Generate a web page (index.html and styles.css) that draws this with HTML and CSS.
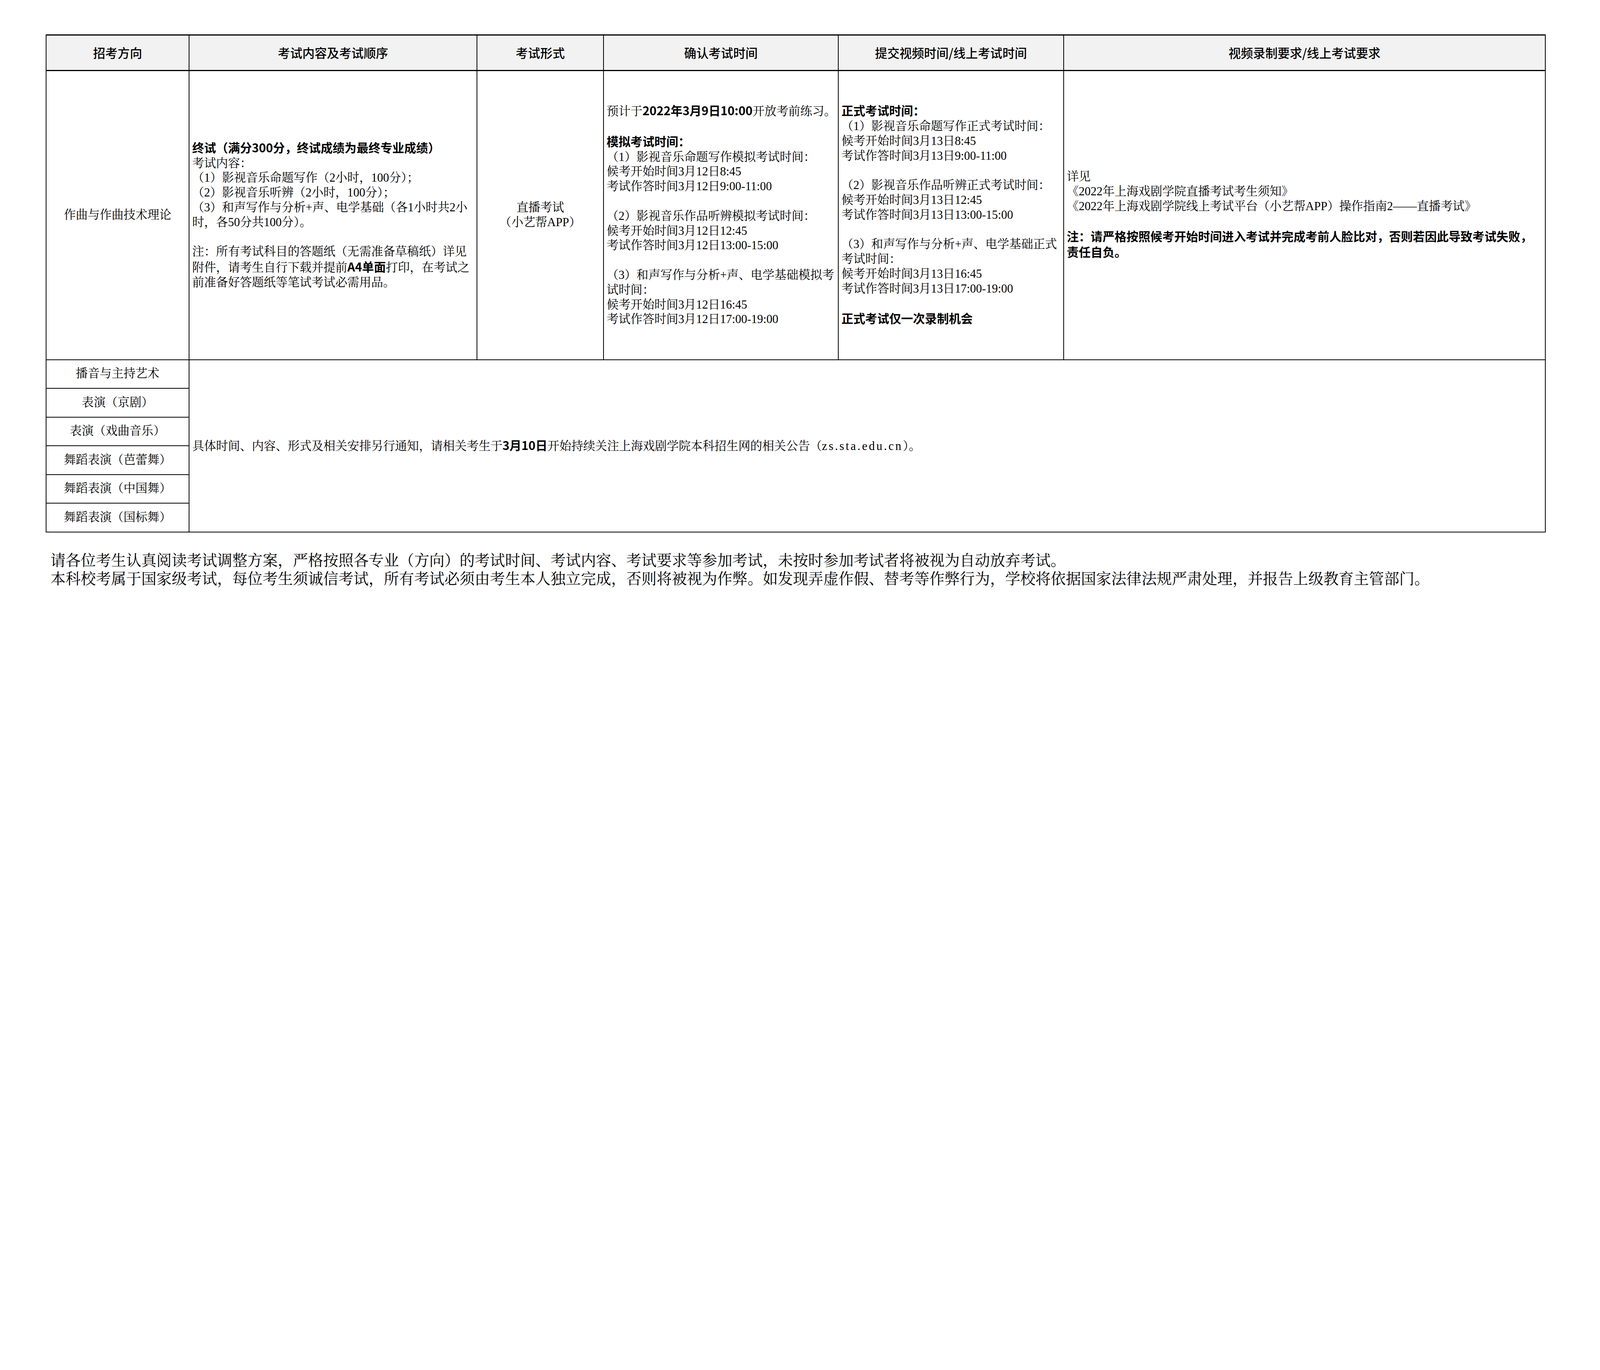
FILE: index.html
```html
<!DOCTYPE html>
<html lang="zh-CN">
<head>
<meta charset="utf-8">
<title>考试安排</title>
<link rel="stylesheet" href="styles.css">
</head>
<body>
<div class="page">
  <table class="grid">
    <colgroup>
      <col class="c1"><col class="c2"><col class="c3"><col class="c4"><col class="c5"><col class="c6">
    </colgroup>
    <thead>
      <tr class="r-head">
        <th>招考方向</th>
        <th>考试内容及考试顺序</th>
        <th>考试形式</th>
        <th>确认考试时间</th>
        <th>提交视频时间/线上考试时间</th>
        <th>视频录制要求/线上考试要求</th>
      </tr>
    </thead>
    <tbody>
      <tr class="r-main">
        <td class="center">作曲与作曲技术理论</td>
        <td class="left"><span class="strong">终试（满分300分，终试成绩为最终专业成绩）</span><br>考试内容：<br>（1）影视音乐命题写作（2小时，100分）；<br>（2）影视音乐听辨（2小时，100分）；<br>（3）和声写作与分析+声、电学基础（各1小时共2小<br>时，各50分共100分）。<br><br>注：所有考试科目的答题纸（无需准备草稿纸）详见<br>附件，请考生自行下载并提前<span class="strong">A4单面</span>打印，在考试之<br>前准备好答题纸等笔试考试必需用品。</td>
        <td class="center">直播考试<br>（小艺帮APP）</td>
        <td class="left">预计于<span class="strong">2022年3月9日10:00</span>开放考前练习。<br><br><span class="strong">模拟考试时间：</span><br>（1）影视音乐命题写作模拟考试时间：<br>候考开始时间3月12日8:45<br>考试作答时间3月12日9:00-11:00<br><br>（2）影视音乐作品听辨模拟考试时间：<br>候考开始时间3月12日12:45<br>考试作答时间3月12日13:00-15:00<br><br>（3）和声写作与分析+声、电学基础模拟考<br>试时间：<br>候考开始时间3月12日16:45<br>考试作答时间3月12日17:00-19:00</td>
        <td class="left"><span class="strong">正式考试时间：</span><br>（1）影视音乐命题写作正式考试时间：<br>候考开始时间3月13日8:45<br>考试作答时间3月13日9:00-11:00<br><br>（2）影视音乐作品听辨正式考试时间：<br>候考开始时间3月13日12:45<br>考试作答时间3月13日13:00-15:00<br><br>（3）和声写作与分析+声、电学基础正式<br>考试时间：<br>候考开始时间3月13日16:45<br>考试作答时间3月13日17:00-19:00<br><br><span class="strong">正式考试仅一次录制机会</span></td>
        <td class="left">详见<br>《2022年上海戏剧学院直播考试考生须知》<br>《2022年上海戏剧学院线上考试平台（小艺帮APP）操作指南2——直播考试》<br><br><span class="strong">注：请严格按照候考开始时间进入考试并完成考前人脸比对，否则若因此导致考试失败，<br>责任自负。</span></td>
      </tr>
      <tr class="r-sub">
        <td class="center">播音与主持艺术</td>
        <td class="left" colspan="5" rowspan="6">具体时间、内容、形式及相关安排另行通知，请相关考生于<span class="strong">3月10日</span>开始持续关注上海戏剧学院本科招生网的相关公告（<span class="url">zs.sta.edu.cn</span>）。</td>
      </tr>
      <tr class="r-sub"><td class="center">表演（京剧）</td></tr>
      <tr class="r-sub"><td class="center">表演（戏曲音乐）</td></tr>
      <tr class="r-sub"><td class="center">舞蹈表演（芭蕾舞）</td></tr>
      <tr class="r-sub"><td class="center">舞蹈表演（中国舞）</td></tr>
      <tr class="r-sub"><td class="center">舞蹈表演（国标舞）</td></tr>
    </tbody>
  </table>
  <div class="notes">
    <p class="note-line">请各位考生认真阅读考试调整方案，严格按照各专业（方向）的考试时间、考试内容、考试要求等参加考试，未按时参加考试者将被视为自动放弃考试。</p>
    <p class="note-line">本科校考属于国家级考试，每位考生须诚信考试，所有考试必须由考生本人独立完成，否则将被视为作弊。如发现弄虚作假、替考等作弊行为，学校将依据国家法律法规严肃处理，并报告上级教育主管部门。</p>
  </div>
</div>
</body>
</html>
```

FILE: styles.css
```css
html, body {
  margin: 0;
  padding: 0;
  background: #ffffff;
  color: #000000;
}

body {
  font-family: "Liberation Serif", "Noto Serif CJK SC", "Noto Sans CJK SC", serif;
}

.page {
  padding: 88px 0 0 117px;
}

.grid {
  border-collapse: collapse;
  table-layout: fixed;
  width: 3838px;
}

.c1 { width: 366px; }
.c2 { width: 737px; }
.c3 { width: 324px; }
.c4 { width: 601px; }
.c5 { width: 577px; }
.c6 { width: 1233px; }

.grid th,
.grid td {
  border: 2px solid #000;
  padding: 0 7px;
  vertical-align: middle;
  white-space: nowrap;
  overflow: hidden;
}

.grid th {
  height: 88px;
  background: #f2f2f2;
  font-family: "Noto Sans CJK SC", "Liberation Sans", sans-serif;
  font-weight: 500;
  font-size: 31.4px;
  line-height: 38px;
  text-align: center;
  border-top: 3px solid #000;
  border-bottom: 3px solid #000;
}

.grid td {
  font-size: 30.55px;
  line-height: 37.8px;
}

.r-main td {
  height: 737.5px;
}

.r-sub td {
  height: 71.5px;
}

.center {
  text-align: center;
}

.left {
  text-align: left;
}

.strong {
  font-family: "Noto Sans CJK SC", "Liberation Sans", sans-serif;
  font-weight: 700;
}

.url {
  letter-spacing: 4px;
}

.notes {
  margin: 48px 0 0 12px;
  font-size: 38.8px;
  line-height: 47px;
  white-space: nowrap;
}

.note-line {
  margin: 0;
}
```
